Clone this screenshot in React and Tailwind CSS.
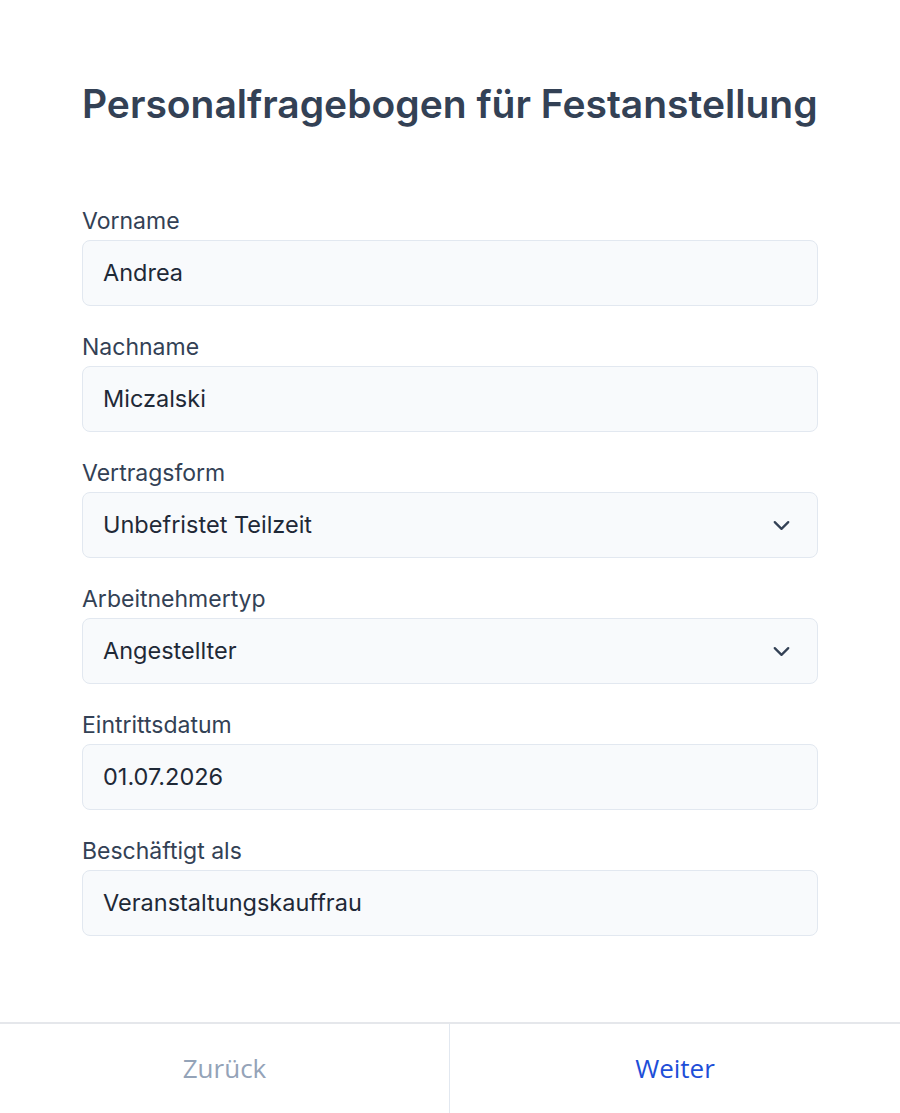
import { ChevronDown } from "lucide-react";

const fields = [
  { label: "Vorname", value: "Andrea" },
  { label: "Nachname", value: "Miczalski" },
  { label: "Vertragsform", value: "Unbefristet Teilzeit", select: true },
  { label: "Arbeitnehmertyp", value: "Angestellter", select: true },
  { label: "Eintrittsdatum", value: "01.07.2026" },
  { label: "Beschäftigt als", value: "Veranstaltungskauffrau" },
];

export default function App() {
  return (
    <div
      className="min-h-screen flex flex-col bg-white"
      style={{ fontFamily: "Inter, 'Noto Sans', sans-serif" }}
    >
      <main className="flex-1 px-[82px] pt-[82px]">
        <h1 className="text-[39px] leading-[44px] font-semibold text-[#334155]">
          Personalfragebogen für Festanstellung
        </h1>

        <div className="mt-[80px] flex flex-col gap-[26px]">
          {fields.map((f) => (
            <div key={f.label} className="flex flex-col gap-[4px]">
              <label className="text-[23px] leading-[30px] text-[#334155]">{f.label}</label>
              <div className="h-[66px] flex items-center justify-between rounded-lg border border-[#e2e8f0] bg-[#f8fafc] pl-[20px] pr-[22px]">
                <span className="text-[23.5px] text-[#1f2937]">{f.value}</span>
                {f.select && <ChevronDown className="text-[#334155]" size={27} strokeWidth={2} />}
              </div>
            </div>
          ))}
        </div>
      </main>

      <footer
        className="grid grid-cols-2 border-t-2 border-[#e5e7eb] h-[91px]"
        style={{ fontFamily: "'Open Sans', 'Noto Sans', sans-serif" }}
      >
        <button type="button" className="text-[26px] text-[#94a3b8] border-r border-[#e2e8f0]">
          Zurück
        </button>
        <button type="button" className="text-[26px] text-[#1d4ed8]">
          Weiter
        </button>
      </footer>
    </div>
  );
}
